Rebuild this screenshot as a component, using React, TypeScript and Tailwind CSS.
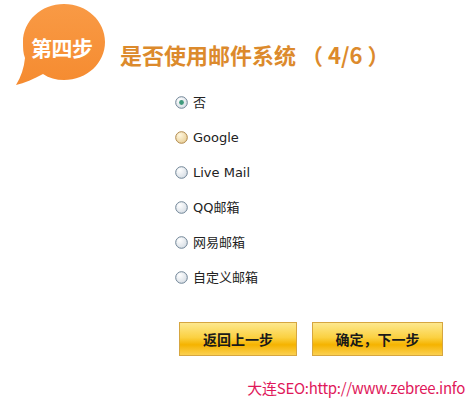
import React from "react";

const options = [
  { label: "否", state: "checked" },
  { label: "Google", state: "hover" },
  { label: "Live Mail", state: "normal" },
  { label: "QQ邮箱", state: "normal" },
  { label: "网易邮箱", state: "normal" },
  { label: "自定义邮箱", state: "normal" },
];

function Radio({ state }: { state: string }) {
  const id = "g-" + state;
  const stops =
    state === "hover"
      ? ["#fff7df", "#e9cf98"]
      : ["#ffffff", "#d6dde4"];
  const stroke = state === "hover" ? "#b0884a" : "#6f8496";
  return (
    <svg width="13" height="13" viewBox="0 0 13 13" className="shrink-0">
      <defs>
        <radialGradient id={id} cx="35%" cy="30%" r="75%">
          <stop offset="0%" stopColor={stops[0]} />
          <stop offset="100%" stopColor={stops[1]} />
        </radialGradient>
      </defs>
      <circle cx="6.5" cy="6.5" r="5.8" fill={`url(#${id})`} stroke={stroke} strokeWidth="1" />
      {state === "checked" && <circle cx="6.5" cy="6.5" r="2.4" fill="#3f9a7c" />}
    </svg>
  );
}

function Badge() {
  return (
    <div className="relative w-[110px] h-[90px] shrink-0">
      <svg width="110" height="90" viewBox="0 0 110 90" className="absolute left-0 top-0">
        <defs>
          <linearGradient id="bg" x1="0" y1="0" x2="0" y2="1">
            <stop offset="0%" stopColor="#f99a45" />
            <stop offset="100%" stopColor="#f58b30" />
          </linearGradient>
        </defs>
        <path
          d="M64 4 C87 4 105 21 105 42 C105 63 87 80 64 80 C56 80 49 78 43 74 C34 79 24 83 16 85 C21 77 24 68 25 58 C23 53 23 48 23 42 C23 21 41 4 64 4 Z"
          fill="url(#bg)"
        />
      </svg>
      <div className="absolute left-[31px] top-[34px] text-white font-bold text-[21px] leading-[26px] tracking-[-0.5px] [font-family:'Noto_Sans_CJK_SC',sans-serif]">
        第四步
      </div>
    </div>
  );
}

export default function App() {
  return (
    <div className="w-[471px] h-[405px] bg-white overflow-hidden [font-family:'DejaVu_Sans','Noto_Sans_CJK_SC',sans-serif]">
      <div className="flex items-start h-[84px] pl-[0px]">
        <Badge />
        <div className="pt-[39px] pl-[10px] text-[#dc8a2c] font-bold text-[22px] leading-[30px] whitespace-pre [font-family:'Noto_Sans_CJK_SC',sans-serif]">
          是否使用邮件系统 （ 4/6 ）
        </div>
      </div>
      <div className="flex flex-col pl-[175px] pt-[1px]">
        {options.map((o) => (
          <div key={o.label} className="flex items-center h-[35px] gap-[5px] text-[13px] text-[#222]">
            <Radio state={o.state} />
            <span>{o.label}</span>
          </div>
        ))}
      </div>
      <div className="flex gap-[15px] pl-[179px] mt-[27px]">
        <button className="w-[118px] h-[34px] border border-[#d6a640] bg-[linear-gradient(to_bottom,#fde88e_0%,#fbd142_45%,#f5b300_68%,#fbd050_100%)] text-[14px] font-bold text-[#1a1a1a] [font-family:'Noto_Sans_CJK_SC',sans-serif]">
          返回上一步
        </button>
        <button className="w-[131px] h-[34px] border border-[#d6a640] bg-[linear-gradient(to_bottom,#fde88e_0%,#fbd142_45%,#f5b300_68%,#fbd050_100%)] text-[14px] font-bold text-[#1a1a1a] [font-family:'Noto_Sans_CJK_SC',sans-serif]">
          确定，下一步
        </button>
      </div>
      <div className="flex justify-end pr-[6px] mt-[22px] text-[15px] leading-[20px] text-[#e0185a] tracking-[-0.3px] [font-family:'Noto_Sans_CJK_SC',sans-serif]">
        大连SEO:http://www.zebree.info
      </div>
    </div>
  );
}
